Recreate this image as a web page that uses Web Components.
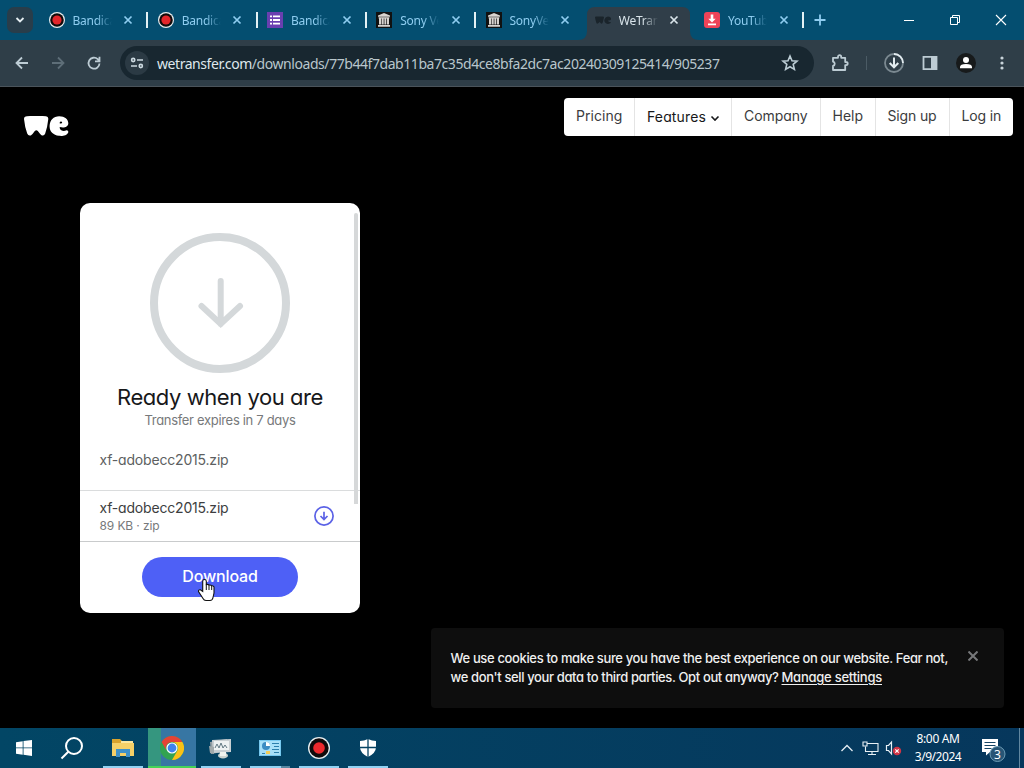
<!DOCTYPE html>
<html lang="en">
<head>
<meta charset="utf-8">
<title>WeTransfer</title>
<style>
    html, body { margin: 0; height: 100%; background: #000; }
    body { overflow: hidden; font-family: "Noto Sans", "Open Sans", sans-serif; }
</style>
</head>
<body>
<desktop-screen></desktop-screen>

<script>
const define = (name, html) => customElements.define(name, class extends HTMLElement {
    connectedCallback() {
        if (this.shadowRoot) return;
        this.attachShadow({ mode: 'open' }).innerHTML = html;
    }
});

// Text run that spreads its letters over a given width
class FitText extends HTMLElement {
    connectedCallback() {
        if (this.shadowRoot) return;
        this.attachShadow({ mode: 'open' }).innerHTML = `
            <style>
                :host { display: inline-block; white-space: nowrap; }
                span { display: inline-block; text-decoration: inherit; text-underline-offset: 2px; }
            </style>
            <span><slot></slot></span>
        `;
        const span = this.shadowRoot.querySelector('span');
        const width = Number(this.getAttribute('width'));
        const count = this.textContent.length;
        const natural = span.getBoundingClientRect().width;
        span.style.letterSpacing = ((width - natural) / count) + 'px';
        this.style.width = width + 'px';
    }
}

const icons = {
    record: '<circle cx="8" cy="8" r="8" fill="#e8eef0"/><circle cx="8" cy="8" r="6.800" fill="#120b0b"/><circle cx="8" cy="8" r="4.600" fill="#e3262b"/>',
    list: '<path fill="#6a3fb0" d="M0 0h16v16H0z"/><path stroke="#fff" stroke-width="1.900" d="M3 4.400h2M6 4.400h7M3 8h2M6 8h7M3 11.600h2M6 11.600h7"/>',
    archive: '<path fill="#111" d="M0 0h16v16H0z"/><path fill="#d8d4d0" d="M8 1l6 2.600v1.200H2V3.600zM2.600 5.200h10.800v1.200H2.600zM3 6.400h2.200v6.200H3zM5.800 6.400h1.900v6.200H5.800zM8.400 6.400h1.900v6.200H8.400zM11 6.400h2v6.200h-2zM2 13h12v1.800H2z"/>',
    we: '<g transform="translate(0 4.500) scale(.36)"><path fill="#1a242b" d="M0 3C0 1 1 0 3 0H22Q25 0 25 3Q23 12 21 18Q19 21 16 19L13 15L9 19Q5 21 4 18Q1 10 0 3zM36 0C43 0 46 5 44 9Q42 12 36 11Q38 16 43 15Q45 17 42 19Q36 22 30 19Q25 15 26 9Q28 1 36 0z"/></g>',
    save: '<rect width="16" height="16" rx="3" fill="#ef4358"/><path fill="#fff" d="M6.700 2.500h2.600v4.300h2.400L8 10.500 4.300 6.800h2.400zM4 11.600h8v1.700H4z"/>'
};

class BrowserTab extends HTMLElement {
    connectedCallback() {
        if (this.shadowRoot) return;
        this.attachShadow({ mode: 'open' }).innerHTML = `
            <style>
                :host { display: flex; align-items: center; box-sizing: border-box; width: 109.25px; height: 40px; padding-left: 10.5px; position: relative; font-size: 12px; color: #8fcdf0; }
                :host(:not([active]):not([last-quiet]))::after { content: ''; position: absolute; right: -1px; top: 12px; width: 2px; height: 16px; background: #e3f1f5; }
                :host([active]) { color: #d9e4ea; }
                .plate { display: none; }
                :host([active]) .plate { display: block; position: absolute; left: -6px; top: 7px; z-index: 0; }
                .icon { flex: none; position: relative; }
                .title { flex: none; position: relative; width: 39px; margin-left: 8px; overflow: hidden; white-space: nowrap; line-height: 18px; padding-top: 1px; letter-spacing: -.25px; -webkit-mask-image: linear-gradient(90deg, #000 60%, transparent); mask-image: linear-gradient(90deg, #000 60%, transparent); }
                .close { flex: none; position: relative; margin-left: 11.5px; }
            </style>
            <svg class="plate" width="121" height="33"><path fill="#303e49" d="M0 33Q9 33 9 24V8Q9 0 17 0H104Q112 0 112 8V24Q112 33 121 33z"/></svg>
            <svg class="icon" width="16" height="16">${icons[this.getAttribute('icon')]}</svg>
            <span class="title"><slot></slot></span>
            <svg class="close" width="10" height="10"><path d="M1.500 1.500l7 7m0-7l-7 7" stroke="currentColor" stroke-width="1.700"/></svg>
        `;
    }
}

define('window-controls', `
    <style>
        :host { display: grid; grid-template-columns: 46px 46px 46px; height: 40px; place-items: center; }
    </style>
    <svg width="12" height="12"><path d="M1 6.500h10" stroke="#fff"/></svg>
    <svg width="12" height="12" fill="none" stroke="#fff"><path d="M1.500 3.500h7v7h-7zM3.500 3.500v-2h7v7h-2"/></svg>
    <svg width="12" height="12"><path d="M1 1l10 10M11 1L1 11" stroke="#fff" stroke-width="1.100"/></svg>
`);

define('tab-strip', `
    <style>
        :host { display: flex; align-items: center; height: 40px; background: #044e70; }
        .search { display: grid; place-items: center; width: 26px; height: 26px; margin: 0 5px 0 7px; border-radius: 7px; background: #293d4a; }
        .add { margin-left: 11px; }
        window-controls { margin-left: auto; }
    </style>
    <div class="search"><svg width="10" height="8"><path d="M1.500 2L5 5.500 8.500 2" fill="none" stroke="#e4edf1" stroke-width="1.800"/></svg></div>
    <browser-tab icon="record">Bandica</browser-tab>
    <browser-tab icon="record">Bandica</browser-tab>
    <browser-tab icon="list">Bandica</browser-tab>
    <browser-tab icon="archive">Sony Ve</browser-tab>
    <browser-tab icon="archive" last-quiet>SonyVeg</browser-tab>
    <browser-tab icon="we" active>WeTran</browser-tab>
    <browser-tab icon="save">YouTub</browser-tab>
    <svg class="add" width="12" height="12"><path d="M6 .5v11M.5 6h11" stroke="#8fcdf0" stroke-width="1.800"/></svg>
    <window-controls></window-controls>
`);

define('address-bar', `
    <style>
        :host { display: flex; align-items: center; flex: 1; height: 34px; box-sizing: border-box; padding: 0 14px 0 5px; border-radius: 17px; background: #182730; color: #b9c6cc; font-size: 14px; }
        .site { display: grid; place-items: center; width: 24px; height: 24px; margin-right: 8px; border-radius: 50%; background: #2b3a44; }
        .star { margin-left: auto; }
        b { font-weight: 400; color: #dfe8ec; }
    </style>
    <div class="site"><svg width="14" height="14" fill="none" stroke="#cddae1" stroke-width="1.600"><circle cx="3.200" cy="4" r="1.600"/><path d="M7 4h6M1 10h6"/><circle cx="10.800" cy="10" r="1.600"/></svg></div>
    <fit-text width="562.5"><b>wetransfer.com</b>/downloads/77b44f7dab11ba7c35d4ce8bfa2dc7ac20240309125414/905237</fit-text>
    <svg class="star" width="20" height="20"><path d="M10 3l2 4.700 5 .4-3.800 3.300 1.200 5L10 13.700l-4.400 2.700 1.200-5L3 8.100l5-.4z" fill="none" stroke="#bccdd5" stroke-width="1.600"/></svg>
`);

define('browser-toolbar', `
    <style>
        :host { display: flex; align-items: center; box-sizing: border-box; height: 47px; padding: 0 4px; background: #2f3e48; border-bottom: 1px solid #4b545b; }
        .cell { display: grid; place-items: center; width: 36px; height: 36px; }
        .rule { width: 1px; height: 14px; margin: 0 9px 0 8px; background: #4b5b65; }
        address-bar { margin: 0 8px; }
        svg { fill: none; stroke: #bdccd4; stroke-width: 1.800; }
    </style>
    <div class="cell"><svg width="16" height="16"><path d="M14 8H3M8 2.500L2.500 8 8 13.500"/></svg></div>
    <div class="cell"><svg width="16" height="16" style="stroke:#5e6e78"><path d="M2 8h11M8 2.500L13.500 8 8 13.500"/></svg></div>
    <div class="cell"><svg width="16" height="16"><path d="M13.500 8.500A5.500 5.500 0 1 1 11.700 4.100L13.500 6M13.500 1.800V6.300H9"/></svg></div>
    <address-bar></address-bar>
    <div class="cell"><svg width="18" height="18"><path d="M2 3.800h5V2.700a1.600 1.600 0 0 1 3.200 0v1.100h4V8h.900a1.500 1.500 0 0 1 0 3.200h-.900V16H2v-4a2.200 2.200 0 0 0 0-4.300z" stroke-linejoin="round"/></svg></div>
    <div class="rule"></div>
    <div class="cell"><svg width="20" height="20"><circle cx="10" cy="10" r="9" stroke="#7b8991"/><path d="M10 1A9 9 0 0 1 19 10" stroke="#e2ebef"/><path d="M10 4.500V14M5.700 10l4.300 4.300L14.300 10" stroke="#e2ebef" stroke-width="2"/></svg></div>
    <div class="cell"><svg width="16" height="16"><path d="M1.500 1.900h13v12.200h-13z"/><path fill="#bdccd4" stroke="none" d="M9 2h5v12H9z"/></svg></div>
    <div class="cell"><svg width="20" height="20" style="stroke:none"><circle cx="10" cy="10" r="10" fill="#171a1b"/><circle cx="10" cy="7" r="3" fill="#fff"/><path d="M4 15.200v-1.200Q4 11 10 11t6 3v1.200z" fill="#fff"/></svg></div>
    <div class="cell"><svg width="4" height="16" style="stroke:none;fill:#c8d4da"><circle cx="2" cy="3" r="1.600"/><circle cx="2" cy="8" r="1.600"/><circle cx="2" cy="13" r="1.600"/></svg></div>
`);

define('site-nav', `
    <style>
        :host { display: flex; height: 38px; border-radius: 4px; overflow: hidden; background: #fff; color: #3b3c3e; font-size: 14px; line-height: 36px; }
        div { box-sizing: border-box; padding-left: 12px; border-right: 1px solid #e4e4e4; }
        div:last-child { border: 0; }
        .open { color: #17181a; line-height: 38px; }
        .open svg { margin-left: 4px; }
    </style>
    <div style="width:71px"><fit-text width="46.5">Pricing</fit-text></div>
    <div class="open" style="width:97px"><fit-text width="59">Features</fit-text><svg width="10" height="7"><path d="M1.500 1.500L5 5l3.500-3.500" fill="none" stroke="#17181a" stroke-width="1.600"/></svg></div>
    <div style="width:89px"><fit-text width="63.5">Company</fit-text></div>
    <div style="width:55px;padding-left:11.5px"><fit-text width="30.5">Help</fit-text></div>
    <div style="width:74px;padding-left:11.5px"><fit-text width="49">Sign up</fit-text></div>
    <div style="width:63px;padding-left:11.5px"><fit-text width="39.5">Log in</fit-text></div>
`);

define('transfer-file', `
    <style>
        :host { display: flex; align-items: center; justify-content: space-between; box-sizing: border-box; height: 51px; padding: 0 26px 0 19.5px; border-top: 1px solid #dadcdd; }
        .name { display: block; height: 18px; line-height: 18px; font-size: 14px; color: #3d3e40; }
        .meta { display: block; height: 16px; line-height: 18px; font-size: 12px; color: #77797b; }
    </style>
    <div>
        <span class="name"><fit-text width="129">xf-adobecc2015.zip</fit-text></span>
        <span class="meta"><fit-text width="60">89 KB · zip</fit-text></span>
    </div>
    <svg width="20" height="20" fill="none" stroke="#5b62e6" stroke-width="1.700"><circle cx="10" cy="10" r="9.100"/><path d="M10 5.800v7.500M6.500 10l3.500 3.500 3.500-3.500"/></svg>
`);

define('transfer-card', `
    <style>
        :host { display: flex; flex-direction: column; position: relative; width: 280px; height: 410px; border-radius: 10px; background: #fff; overflow: hidden; }
        .body { display: flex; flex-direction: column; align-items: center; height: 287px; }
        .ring { margin-top: 30px; flex: none; }
        h2 { margin: 9px 0 0; font-weight: 400; font-size: 22px; line-height: 30px; color: #17181a; }
        .expires { font-size: 13px; line-height: 16px; color: #77797b; }
        .name { align-self: flex-start; margin: 23px 0 0 19.5px; font-size: 14px; line-height: 18px; color: #5d5f61; }
        .footer { display: flex; justify-content: center; align-items: flex-start; flex: 1; padding-top: 15px; border-top: 1px solid #c9cbcc; }
        button { width: 156px; height: 40px; padding: 0 0 2px; border: 0; border-radius: 20px; background: #4e60f6; color: #fff; font: 500 16px/38px Inter, sans-serif; }
        .thumb { position: absolute; right: 2px; top: 10px; width: 4px; height: 291px; border-radius: 2px 2px 0 0; background: #d6d8d9; }
    </style>
    <div class="body">
        <svg class="ring" width="140" height="140" fill="none" stroke="#d4d8da"><circle cx="70" cy="70" r="66" stroke-width="8"/><path d="M70.700 48v43M51.500 73L70.700 91 90 73" stroke-width="6" stroke-linecap="round"/></svg>
        <h2><fit-text width="206">Ready when you are</fit-text></h2>
        <fit-text class="expires" width="151">Transfer expires in 7 days</fit-text>
        <fit-text class="name" width="129">xf-adobecc2015.zip</fit-text>
    </div>
    <transfer-file></transfer-file>
    <div class="footer"><button><fit-text width="75.5">Download</fit-text></button></div>
    <div class="thumb"></div>
`);

define('cookie-notice', `
    <style>
        :host { display: flex; justify-content: space-between; box-sizing: border-box; width: 573px; height: 80px; padding: 21px 26px 0 19.5px; border-radius: 4px; background: #0e0e0e; color: #f0f0f0; font-size: 13px; font-weight: 500; line-height: 19px; }
        p { margin: 0; }
        .line { display: flex; }
        .link { margin-left: 3px; text-decoration: underline; }
        svg { margin-top: 2px; }
    </style>
    <p>
        <span class="line"><fit-text width="497.5">We use cookies to make sure you have the best experience on our website. Fear not,</fit-text></span>
        <span class="line"><fit-text width="328">we don't sell your data to third parties. Opt out anyway?</fit-text><fit-text class="link" width="100.5">Manage settings</fit-text></span>
    </p>
    <svg width="10" height="10"><path d="M.5 .5l9 9M9.500 .5l-9 9" stroke="#77787a" stroke-width="2"/></svg>
`);

define('site-page', `
    <style>
        :host { display: flex; flex-direction: column; position: relative; height: 641px; background: #000; font-family: Inter, "Open Sans", sans-serif; font-feature-settings: "cv11" 1; }
        header { display: flex; justify-content: space-between; align-items: flex-start; padding: 11px 11px 0 24px; }
        .logo { margin-top: 18px; }
        transfer-card { margin: 67px 0 0 80px; }
        cookie-notice { position: absolute; right: 20px; bottom: 20px; }
        .pointer { position: absolute; left: 197px; top: 490px; }
    </style>
    <header>
        <svg class="logo" width="45" height="20"><path fill="#fff" d="M0 3Q0 .3 3 .2Q12-.5 22 .2Q24.500.4 24.300 3Q23.500 11 21.200 17.500Q20 20.500 17.500 19.200Q16 18 13.800 15Q12.300 13.500 10.800 15Q8.500 18.500 6.800 19.400Q4.300 20.300 3.200 17.500Q.8 11 0 3zM35.200 .2C41 .2 44.500 3.500 44.300 7.500C44 11.500 39.500 12 35.700 11Q35.500 14 38.500 14.800Q40.500 15.200 42.500 14.300Q44.500 14.200 44.300 16.200C43 19.800 38 20.300 35 19.800C29 19 25.500 15.500 25.600 10C25.800 4 29.500.2 35.200.2zM35.600 7.200Q38 7.800 38.200 6.500Q38 5.300 36.800 5.400Q35.600 5.700 35.600 7.200z"/></svg>
        <site-nav></site-nav>
    </header>
    <transfer-card></transfer-card>
    <cookie-notice></cookie-notice>
    <svg class="pointer" width="18" height="25"><path d="M7.500 2.500Q5.700 2.500 5.700 4.300V14.500L3.400 12.800Q1.300 12.500 1.500 14.500L6 21.500Q7 23.500 9 23.500H13Q15.500 23.500 16 20.500L17 16V10Q16.500 8.500 14.700 8.800Q14 7.700 12 8Q11 7 9.300 7.500V4.300Q9.300 2.500 7.500 2.500z" fill="#fff" stroke="#111" stroke-width="1.100"/><path d="M9.300 7.500V13M12 8V13M14.700 8.800V13" stroke="#111"/></svg>
`);

define('taskbar-item', `
    <style>
        :host { display: grid; place-items: center; box-sizing: border-box; position: relative; width: 48px; height: 40px; margin-right: 1px; }
        :host([running])::after { content: ''; position: absolute; left: 4px; right: 4px; bottom: 0; height: 2px; background: #91d2f3; }
        :host([active]) { background: linear-gradient(90deg, #35967f 13px, #3776a3 13px); }
        :host([active])::after { content: ''; position: absolute; left: 0; right: 0; bottom: 0; height: 2px; background: #46d357; }
        :host([stacked])::after { right: 4px; background: linear-gradient(90deg, #91d2f3 31px, #5787a2 31px); }
    </style>
    <slot></slot>
`);

define('system-tray', `
    <style>
        :host { display: flex; align-items: center; height: 40px; color: #fff; font-size: 12px; }
        .clock { display: flex; flex-direction: column; align-items: center; width: 46px; margin: 0 19px 0 13px; line-height: 18px; padding-bottom: 1px; }
        .notes { margin-right: 13px; }
        .peek { width: 4px; height: 40px; border-left: 1px solid #6187a0; }
        text { font: 12px "Noto Sans", sans-serif; }
    </style>
    <svg width="14" height="10" style="margin-right:8px"><path d="M1.500 8L7 2.500 12.500 8" fill="none" stroke="#e4edf3" stroke-width="1.300"/></svg>
    <svg width="17" height="16" style="margin-right:6px" fill="none" stroke="#e8f0f5" stroke-width="1.100"><path d="M5 3.500h11v8H3.500V6.500M6 14.500h8M10 11.500v3"/><path d="M1 2h4v4H1z"/></svg>
    <svg width="17" height="16"><path d="M1.500 5.500h2l3-3.500v12l-3-3.500h-2z" fill="none" stroke="#e8f0f5" stroke-width="1.200"/><circle cx="12" cy="11" r="4.200" fill="#d13445"/><path d="M10.300 9.300l3.400 3.400m0-3.400l-3.400 3.400" stroke="#fff" stroke-width="1.200"/></svg>
    <div class="clock"><fit-text width="43">8:00 AM</fit-text><fit-text width="46.5">3/9/2024</fit-text></div>
    <svg class="notes" width="26" height="28"><path d="M2 5h16v13h-8l-4 3.500V18H2z" fill="#fff"/><path d="M4.500 8.500h11M4.500 11.500h11M4.500 14.500h7" stroke="#164565" stroke-width="1.200"/><circle cx="17.500" cy="20" r="7.500" fill="#285575" stroke="#6d9db6"/><text x="17.500" y="24.500" text-anchor="middle" fill="#fff">3</text></svg>
    <div class="peek"></div>
`);

define('task-bar', `
    <style>
        :host { display: flex; justify-content: space-between; height: 40px; background: linear-gradient(90deg, #024665, #06375c); }
        .apps { display: flex; }
        .bare { margin-right: 0; }
    </style>
    <div class="apps">
        <taskbar-item class="bare"><svg width="16" height="16" fill="#fff"><path d="M0 2.200L6.700 1.200V7.500H0zM7.500 1.100L16 0V7.500H7.500zM0 8.300h6.700v6.400L0 13.800zM7.500 8.300H16V16l-8.500-1.200z"/></svg></taskbar-item>
        <taskbar-item class="bare" style="margin-right:3px"><svg width="24" height="24" fill="none" stroke="#fff" stroke-width="2"><circle cx="14" cy="10" r="8"/><path d="M8.300 15.700L1.500 22.500"/></svg></taskbar-item>
        <taskbar-item running><svg width="24" height="20"><path fill="#d9a32d" d="M1 1h8l2 2h11v4H1z"/><path fill="#f5d067" d="M1 5h22v13H1z"/><path fill="#fbe7a0" d="M10 3h12v2H10z"/><path fill="#3e91c9" d="M5 11h14v8h-4v-4H9v4H5z"/></svg></taskbar-item>
        <taskbar-item active><svg width="24" height="24"><circle cx="12" cy="12" r="12" fill="#32a350"/><path fill="#e54335" d="M1.600 6A12 12 0 0 1 22.400 6H12a6 6 0 0 0-5.500 8.500z"/><path fill="#fbc116" d="M22.400 6A12 12 0 0 1 12 24l5.200-9A6 6 0 0 0 12 6z"/><circle cx="12" cy="12" r="5.600" fill="#fff"/><circle cx="12" cy="12" r="4.400" fill="#3f83ed"/></svg></taskbar-item>
        <taskbar-item running><svg width="24" height="24"><path fill="#929da3" d="M1 6l17-3 1 12-17 3z"/><path fill="#c9d0d3" d="M3 4l19-1v13l-18 1z"/><path fill="#eef2f3" d="M5 5h15v9H5z"/><path d="M6 12l2-4 2 4 2-5 2 5 2-3 2 3" fill="none" stroke="#627984"/><path fill="#a2aaac" d="M0 10l5 1v7l-4-1z"/><ellipse cx="14" cy="19.500" rx="5" ry="3" fill="#cbd3cf"/><path fill="#f0f3ef" d="M11 16h6v4h-6z"/></svg></taskbar-item>
        <taskbar-item running stacked><svg width="22" height="16"><path fill="#76c8ef" d="M0 0h22v16H0z"/><path fill="#a8e0f8" d="M1 1h20v14H1z"/><circle cx="7" cy="6" r="4" fill="#3c8cc3"/><path fill="#fff" d="M7 6V2a4 4 0 0 1 4 4z"/><path stroke="#2c7fac" d="M13 3.500h7M15 6.500h5M13 9.500h7M15 12.500h5M3 13.500h3"/><path fill="#f4ce59" d="M7 11h4v3H7z"/></svg></taskbar-item>
        <taskbar-item running><svg width="22" height="22"><circle cx="11" cy="11" r="11" fill="#e9eff1"/><circle cx="11" cy="11" r="9.700" fill="#100b0c"/><circle cx="11" cy="11" r="5.800" fill="#ed292d"/></svg></taskbar-item>
        <taskbar-item running><svg width="18" height="20"><path fill="#fff" d="M9 1q4 2 8 2v6q0 6-8 10Q1 15 1 9V3q4 0 8-2z"/><path stroke="#064363" stroke-width="1.300" d="M9 0v20M0 9.500h18"/></svg></taskbar-item>
    </div>
    <system-tray></system-tray>
`);

define('desktop-screen', `
    <style>
        :host { display: flex; flex-direction: column; width: 1024px; height: 768px; overflow: hidden; }
    </style>
    <tab-strip></tab-strip>
    <browser-toolbar></browser-toolbar>
    <site-page></site-page>
    <task-bar></task-bar>
`);

customElements.define('browser-tab', BrowserTab);
customElements.define('fit-text', FitText);
</script>
</body>
</html>
